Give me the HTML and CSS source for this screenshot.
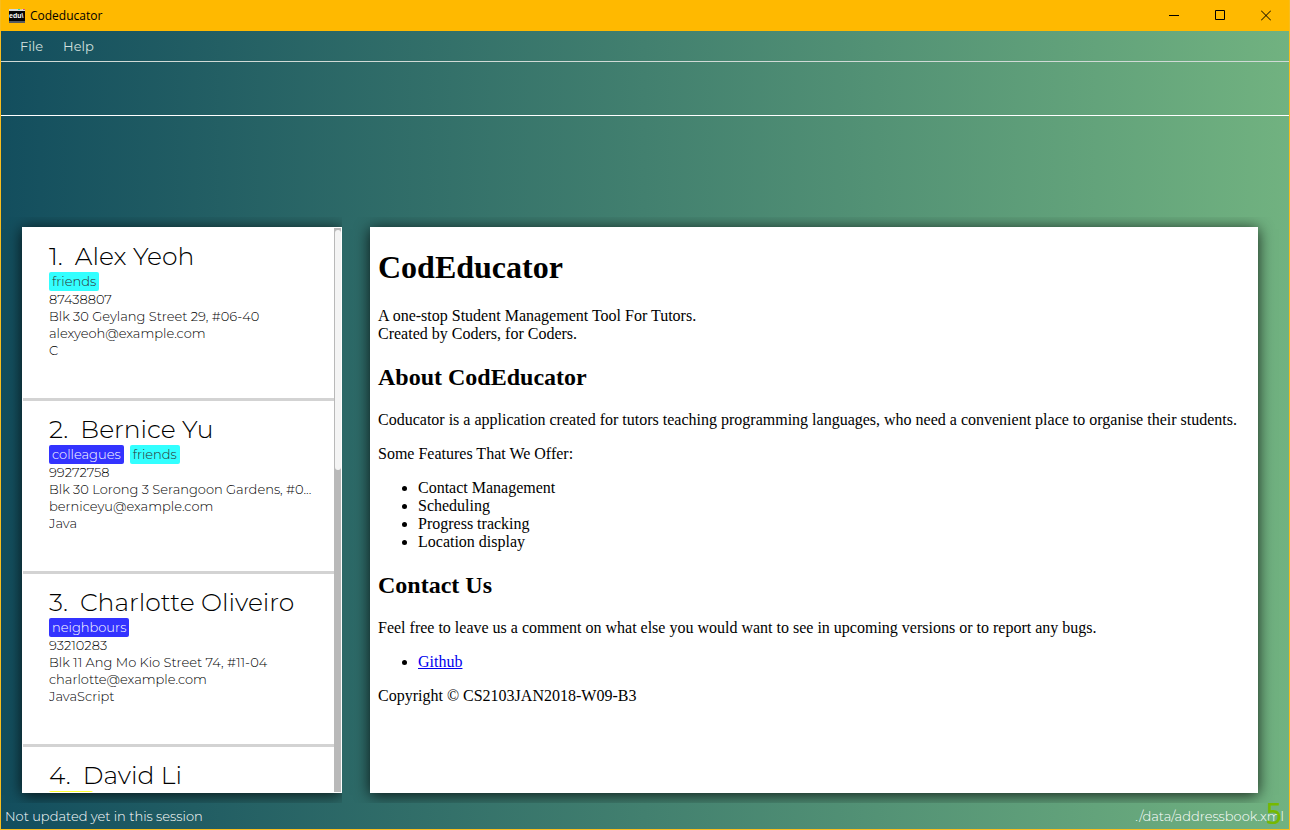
FILE: index.html
```html
<!DOCTYPE html>
<html lang="en">
<head>
<meta charset="utf-8">
<title>Codeducator</title>
<link rel="stylesheet" href="styles.css">
</head>
<body>
<div class="window">
  <header class="titlebar">
    <svg class="app-icon" width="16" height="14" viewBox="0 0 16 14" aria-hidden="true">
      <rect width="16" height="14" fill="#555a60"/>
      <rect width="16" height="2" fill="#d4d8da"/>
      <rect x="9" width="2" height="1" fill="#2fe0b0"/>
      <rect x="11" width="2" height="1" fill="#e8d870"/>
      <rect x="14" width="2" height="1" fill="#e05080"/>
      <rect y="2" width="16" height="10" fill="#050505"/>
      <text class="icon-label" x="0" y="9">edu\</text>
    </svg>
    <span class="app-name">Codeducator</span>
    <div class="window-controls">
      <button type="button" aria-label="Minimize"><svg width="10" height="11" viewBox="0 0 10 11"><path d="M0 5.5H10"/></svg></button>
      <button type="button" aria-label="Maximize"><svg width="10" height="11" viewBox="0 0 10 11"><path d="M.5 .5H9.5V9.5H.5Z"/></svg></button>
      <button type="button" aria-label="Close"><svg width="10" height="11" viewBox="0 0 10 11"><path d="M0 .5L10 10.5M10 .5L0 10.5"/></svg></button>
    </div>
  </header>
  <div class="client">
    <nav class="menubar">
      <button type="button">File</button>
      <button type="button">Help</button>
    </nav>
    <div class="command"><input class="command-input" type="text" aria-label="Command"></div>
    <div class="result"></div>
    <main class="panes">
      <section class="list-pane">
        <div class="list-box">
          <ol class="people">
            <li class="person">
              <h2 class="name"><span>1.</span><span>Alex Yeoh</span></h2>
              <div class="tags"><span class="tag cyan">friends</span></div>
              <p>87438807</p>
              <p>Blk 30 Geylang Street 29, #06-40</p>
              <p>alexyeoh@example.com</p>
              <p>C</p>
            </li>
            <li class="person">
              <h2 class="name"><span>2.</span><span>Bernice Yu</span></h2>
              <div class="tags"><span class="tag blue">colleagues</span><span class="tag cyan">friends</span></div>
              <p>99272758</p>
              <p>Blk 30 Lorong 3 Serangoon Gardens, #0...</p>
              <p>berniceyu@example.com</p>
              <p>Java</p>
            </li>
            <li class="person">
              <h2 class="name"><span>3.</span><span>Charlotte Oliveiro</span></h2>
              <div class="tags"><span class="tag blue">neighbours</span></div>
              <p>93210283</p>
              <p>Blk 11 Ang Mo Kio Street 74, #11-04</p>
              <p>charlotte@example.com</p>
              <p>JavaScript</p>
            </li>
            <li class="person">
              <h2 class="name"><span>4.</span><span>David Li</span></h2>
              <div class="tags"><span class="tag yellow"></span></div>
            </li>
          </ol>
          <div class="scrollbar"><div class="thumb"></div></div>
        </div>
      </section>
      <article class="page">
        <h1>CodEducator</h1>
        <p>A one-stop Student Management Tool For Tutors.<br>Created by Coders, for Coders.</p>
        <h2>About CodEducator</h2>
        <p>Coducator is a application created for tutors teaching programming languages, who need a convenient place to organise their students.</p>
        <p>Some Features That We Offer:</p>
        <ul>
          <li>Contact Management</li>
          <li>Scheduling</li>
          <li>Progress tracking</li>
          <li>Location display</li>
        </ul>
        <h2>Contact Us</h2>
        <p>Feel free to leave us a comment on what else you would want to see in upcoming versions or to report any bugs.</p>
        <ul><li><a href="#github">Github</a></li></ul>
        <p>Copyright © CS2103JAN2018-W09-B3</p>
      </article>
    </main>
    <footer class="statusbar">
      <span>Not updated yet in this session</span>
      <span>./data/addressbook.xml</span>
      <span class="fps">5</span>
    </footer>
  </div>
</div>
</body>
</html>
```
FILE: styles.css
```css
* { box-sizing: border-box; }
body { margin: 0; }
button { border: 0; padding: 0; background: none; color: inherit; font: inherit; }

.window {
  display: flex;
  flex-direction: column;
  height: 100vh;
  border: 1px solid #f7bd1e;
  border-top: 0;
  background: #ffb900;
  font: 300 13px/17px Montserrat, Inter, sans-serif;
}

.titlebar {
  display: flex;
  align-items: center;
  height: 31px;
  padding-left: 8px;
  gap: 5px;
  color: #000;
  font: 400 12px/16px "Segoe UI", "Open Sans", sans-serif;
}
.icon-label { fill: #fff; font: 700 7px "Liberation Sans", sans-serif; }
.window-controls { display: flex; margin-left: auto; }
.window-controls button { display: grid; place-items: center; width: 46px; height: 31px; }
.window-controls svg { fill: none; stroke: #000; stroke-width: 1; }

.client {
  display: flex;
  flex-direction: column;
  flex: 1;
  min-height: 0;
  background: linear-gradient(to right, #134e5e, #71b280);
  color: #e6efec;
}
.menubar {
  display: flex;
  gap: 20px;
  height: 31px;
  padding: 0 19px;
  border-bottom: 1px solid #d0dad6;
  font-weight: 400;
  color: #d3e0df;
}
.command { height: 54px; border-bottom: 1px solid #fff; }
.command-input {
  display: block;
  width: 100%;
  height: 100%;
  padding: 0 20px;
  border: 0;
  outline: 0;
  background: transparent;
  color: #fff;
  font: inherit;
}
.result { height: 101px; }

.panes {
  display: flex;
  flex: 1;
  min-height: 0;
  overflow: hidden;
  padding-right: 31px;
  gap: 28px;
}
.list-pane {
  width: 341px;
  flex: none;
  overflow: hidden;
  padding: 10px 0 10px 21px;
}
.list-box {
  display: flex;
  height: 100%;
  padding: 1px;
  background: #fff;
  color: #000;
  box-shadow: 0 2px 14px rgba(0, 0, 0, .8);
}
.people {
  flex: 1;
  min-width: 0;
  margin: 0;
  padding: 0;
  overflow: hidden;
  list-style: none;
}
.person {
  height: 173px;
  padding: 14px 16px 0 26px;
  border-bottom: 3px solid #d3d3d3;
}
.person p {
  margin: 0;
  overflow: hidden;
  white-space: nowrap;
  text-overflow: ellipsis;
}
.name {
  display: flex;
  gap: 12px;
  margin: 0 0 1px;
  font-size: 25px;
  line-height: 29px;
  font-weight: 300;
  white-space: nowrap;
}
.tags { display: flex; gap: 6px; height: 19px; }
.tag { padding: 1px 3px; border-radius: 2px; }
.cyan { background: #3ff; color: #303030; }
.blue { background: #33f; color: #fff; }
.yellow { width: 44px; background: #ff3; }
.scrollbar { width: 7px; padding: 2px 0 0 1px; background: #b9b9b9; }
.thumb { height: 240px; border-radius: 3px; background: #f4f4f4; }

.page {
  flex: 1;
  min-width: 0;
  margin: 10px 0;
  padding: 0 8px;
  background: #fff;
  color: #000;
  box-shadow: 0 2px 14px rgba(0, 0, 0, .8);
  font: 400 16px/18px "Times New Roman", "Liberation Serif", serif;
}
.page h1 { margin: 21px 0; font-size: 32px; line-height: 38px; }
.page h2 { margin: 20px 0; font-size: 24px; line-height: 28px; }
.page p, .page ul { margin: 16px 0; }
.page ul { padding-left: 40px; }
.page a { color: #00e; }

.statusbar {
  position: relative;
  display: flex;
  justify-content: space-between;
  align-items: center;
  height: 26px;
  padding: 0 5px 0 4px;
  color: #fff;
}
.fps {
  position: absolute;
  right: 6px;
  bottom: 1px;
  color: #76b900;
  font: 400 29px/28px "DejaVu Sans Mono", monospace;
}
```
